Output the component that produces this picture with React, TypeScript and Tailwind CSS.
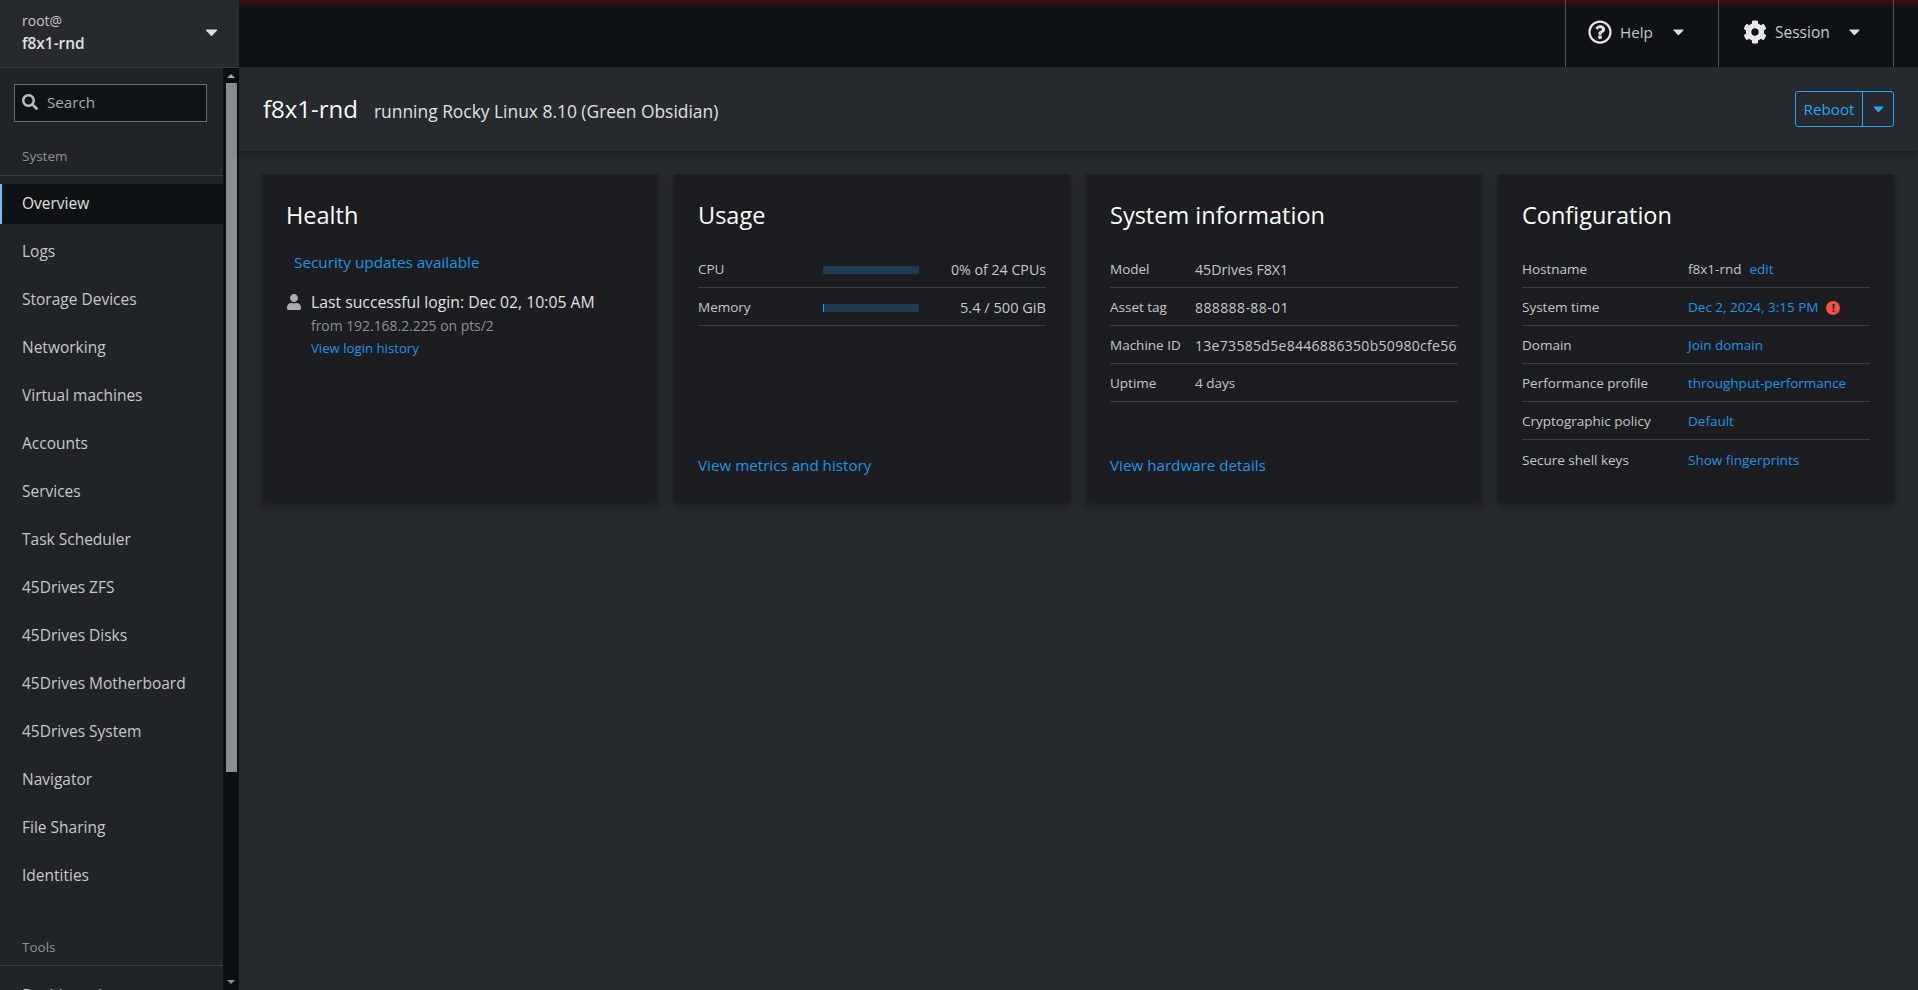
import React from "react";

const navItems = [
  "Overview",
  "Logs",
  "Storage Devices",
  "Networking",
  "Virtual machines",
  "Accounts",
  "Services",
  "Task Scheduler",
  "45Drives ZFS",
  "45Drives Disks",
  "45Drives Motherboard",
  "45Drives System",
  "Navigator",
  "File Sharing",
  "Identities",
];

function Caret({ className }: { className: string }) {
  return (
    <svg viewBox="0 0 12 8" className={className} fill="currentColor">
      <path d="M1 0.5h10c.6 0 .9.7.5 1.1l-5 5.2c-.3.3-.7.3-1 0l-5-5.2C.1 1.2.4.5 1 .5z" />
    </svg>
  );
}

function SidebarScrollbar() {
  return (
    <div className="flex w-[16px] shrink-0 flex-col items-center bg-[#0d1013]">
      <div className="mt-[6px] h-0 w-0 border-x-[4px] border-b-[4px] border-x-transparent border-b-[#a5a7a9]" />
      <div className="mt-[5px] h-[689px] w-[11px] bg-[#8b8e90]" />
      <div className="flex-1" />
      <div className="mb-[6px] h-0 w-0 border-x-[4px] border-t-[4px] border-x-transparent border-t-[#8b8e90]" />
    </div>
  );
}

function Sidebar() {
  return (
    <aside className="flex w-[239px] shrink-0 flex-col bg-[#212427]">
      <div className="flex h-[68px] shrink-0 items-center justify-between border-b border-[#3c3f42] bg-[#26292d] pb-[4px] pl-[22px] pr-[21px]">
        <div className="flex flex-col">
          <span className="text-[14px] leading-[24px] text-[#c7c7c7]">root@</span>
          <span className="text-[15.4px] font-semibold leading-[22px] text-[#e0e0e0]">f8x1-rnd</span>
        </div>
        <Caret className="mt-[2px] h-[8px] w-[13px] text-[#e0e0e0]" />
      </div>
      <div className="flex min-h-0 flex-1">
        <div className="min-w-0 flex-1 overflow-hidden">
          <div className="pl-[14px] pr-[16px] pt-[16px]">
            <div className="flex h-[38px] items-center gap-[9px] border border-[#6a6e73] bg-[#101316] pb-[2px] pl-[7px]">
              <svg viewBox="0 0 512 512" className="h-[16px] w-[16px] text-[#b8bbbe]" fill="currentColor">
                <path d="M505 442.7L405.3 343c-4.5-4.5-10.6-7-17-7H372c27.6-35.3 44-79.7 44-128C416 93.1 322.9 0 208 0S0 93.1 0 208s93.1 208 208 208c48.3 0 92.7-16.4 128-44v16.3c0 6.4 2.5 12.5 7 17l99.7 99.700c9.4 9.4 24.6 9.4 33.9 0l28.3-28.3c9.4-9.4 9.4-24.6.1-34zM208 336c-70.7 0-128-57.2-128-128 0-70.7 57.2-128 128-128 70.7 0 128 57.2 128 128 0 70.7-57.2 128-128 128z" />
              </svg>
              <span className="text-[15.2px] text-[#a9abae]">Search</span>
            </div>
          </div>
          <div className="mt-[24px] border-b border-[#3c3f42] pb-[9px] pl-[22px] text-[13.5px] leading-[20px] text-[#8f9194]">
            System
          </div>
          <nav className="mt-[8px] flex flex-col gap-[8px]">
            {navItems.map((item, i) => (
              <div
                key={item}
                className={
                  i === 0
                    ? "flex h-[40px] items-center border-l-2 border-[#73bcf7] bg-[#0f1214] pl-[20px] text-[15.5px] text-[#e0e0e0]"
                    : "flex h-[40px] items-center pl-[22px] text-[15.5px] text-[#c7c7c7]"
                }
              >
                {item}
              </div>
            ))}
          </nav>
          <div className="mt-[41px] border-b border-[#3c3f42] pb-[8px] pl-[22px] text-[13.5px] leading-[20px] text-[#8f9194]">
            Tools
          </div>
          <div className="mt-[18px] pl-[22px] text-[15.5px] text-[#c7c7c7]">Dashboard</div>
        </div>
        <SidebarScrollbar />
      </div>
    </aside>
  );
}

function TopBar() {
  return (
    <header className="relative flex h-[67px] shrink-0 justify-end bg-[#0f1214] pr-[24px]">
      <div className="absolute inset-x-0 top-0 h-[8px] bg-gradient-to-b from-[#3f0e14] to-[#0f1214]" />
      <div className="relative flex h-full w-[153px] items-center border-l border-[#4f5255] pb-[3px] pl-[22px] text-[#c7c7c7]">
        <svg viewBox="0 0 512 512" className="h-[24px] w-[24px] text-[#e8e8e8]" fill="currentColor">
          <path d="M256 8C119 8 8 119 8 256s111 248 248 248 248-111 248-248S393 8 256 8zm0 448c-110.500 0-200-89.500-200-200S145.500 56 256 56s200 89.500 200 200-89.500 200-200 200zm107-255c0 67-72.400 68-72.400 92.800v6.200c0 6.600-5.400 12-12 12h-45.200c-6.600 0-12-5.400-12-12v-8.500c0-35.700 27.100-50 47.600-61.500 17.500-9.800 28.300-16.500 28.300-29.600 0-17.200-22-28.700-39.800-28.700-23.200 0-33.900 11-49 30-4.100 5.100-11.500 6.100-16.700 2.100l-27.600-20.900c-5.100-3.900-6.200-11-2.600-16.300C187.700 134.400 215.500 112 262.900 112c48 0 100.100 37.500 100.100 89zM298 368c0 23.200-18.800 42-42 42s-42-18.800-42-42 18.800-42 42-42 42 18.800 42 42z" />
        </svg>
        <span className="ml-[8px] text-[15.2px] leading-[20px]">Help</span>
        <Caret className="ml-[20px] mt-[1px] h-[7px] w-[11px] text-[#e0e0e0]" />
      </div>
      <div className="relative flex h-full w-[176px] items-center border-x border-[#4f5255] pb-[3px] pl-[24px] text-[#c7c7c7]">
        <svg viewBox="0 0 512 512" className="h-[24px] w-[24px] text-[#e8e8e8]" fill="currentColor">
          <path d="M487.400 315.700l-42.600-24.600c4.300-23.200 4.300-47 0-70.200l42.600-24.600c4.900-2.800 7.100-8.600 5.500-14-11.100-35.600-30-67.800-54.700-94.600-3.800-4.100-10-5.100-14.800-2.300L380.800 110c-17.900-15.400-38.500-27.300-60.800-35.100V25.800c0-5.600-3.900-10.500-9.400-11.700-36.700-8.200-74.300-7.800-109.200 0-5.500 1.200-9.400 6.100-9.400 11.700V75c-22.200 7.900-42.800 19.800-60.800 35.100L88.700 85.500c-4.900-2.800-11-1.900-14.800 2.300-24.700 26.700-43.600 58.900-54.700 94.600-1.700 5.400.6 11.200 5.500 14L67.300 221c-4.300 23.200-4.300 47 0 70.200l-42.600 24.600c-4.900 2.800-7.100 8.600-5.500 14 11.100 35.600 30 67.800 54.700 94.600 3.800 4.100 10 5.100 14.800 2.300l42.600-24.600c17.900 15.400 38.500 27.300 60.800 35.100v49.200c0 5.600 3.900 10.500 9.400 11.700 36.700 8.200 74.300 7.800 109.200 0 5.500-1.200 9.400-6.100 9.400-11.700v-49.200c22.200-7.900 42.800-19.800 60.800-35.100l42.600 24.600c4.900 2.800 11 1.900 14.800-2.300 24.700-26.700 43.600-58.900 54.700-94.600 1.500-5.500-.7-11.300-5.600-14.100zM256 336c-44.100 0-80-35.900-80-80s35.900-80 80-80 80 35.900 80 80-35.900 80-80 80z" />
        </svg>
        <span className="ml-[8px] text-[15.5px] leading-[20px]">Session</span>
        <Caret className="ml-[19px] mt-[1px] h-[7px] w-[11px] text-[#e0e0e0]" />
      </div>
    </header>
  );
}

function Row({ label, labelClass, children }: { label: string; labelClass: string; children: React.ReactNode }) {
  return (
    <div className="flex h-[38px] items-center border-b border-[#3c3f42] pt-[2px] text-[13.5px]">
      <span className={labelClass + " shrink-0 text-[#c7c7c7]"}>{label}</span>
      {children}
    </div>
  );
}

function Card({ title, children }: { title: string; children: React.ReactNode }) {
  return (
    <section className="flex h-[328px] flex-col bg-[#1b1d21] px-[24px] pb-[24px] pt-[25px] shadow-[0_4px_8px_rgba(3,3,3,0.3)]">
      <h2 className="text-[23.5px] leading-[32px] font-normal text-white">{title}</h2>
      {children}
    </section>
  );
}

function CardLink({ children }: { children: React.ReactNode }) {
  return <a className="mt-auto mb-[1px] text-[15.2px] text-[#1f95e2]">{children}</a>;
}

function Bar({ used }: { used: boolean }) {
  return (
    <div className="ml-[46px] flex h-[8px] w-[96px] bg-[#1e3a4f]">
      {used && <div className="w-[1px] bg-[#2b9af3]" />}
    </div>
  );
}

export default function App() {
  return (
    <div className="flex h-[990px] w-[1918px] overflow-hidden bg-[#26292d] font-['Open_Sans',sans-serif]">
      <Sidebar />
      <div className="flex min-w-0 flex-1 flex-col">
        <TopBar />
        <div className="flex h-[84px] shrink-0 items-center justify-between bg-[#26292d] pl-[24px] pr-[24px] shadow-[0_4px_6px_rgba(3,3,3,0.25)]">
          <div className="flex items-baseline gap-[16px]">
            <span className="text-[24px] text-white">f8x1-rnd</span>
            <span className="text-[17.4px] text-[#e0e0e0]">running Rocky Linux 8.10 (Green Obsidian)</span>
          </div>
          <div className="flex h-[36px] w-[99px] rounded-[3px] border border-[#1fa7f8] text-[#1fa7f8]">
            <div className="flex flex-1 items-center justify-center border-r border-[#1fa7f8] text-[15.2px]">Reboot</div>
            <div className="flex w-[30px] items-center justify-center">
              <Caret className="h-[7px] w-[11px]" />
            </div>
          </div>
        </div>
        <div className="grid grid-cols-4 gap-[16px] pl-[23px] pr-[24px] pt-[23px]">
          <Card title="Health">
            <a className="mt-[19px] pl-[8px] text-[15.3px] leading-[24px] text-[#1f95e2]">Security updates available</a>
            <div className="ml-[1px] mt-[17px] flex gap-[10px]">
              <svg viewBox="0 0 448 512" className="mt-[3px] h-[16px] w-[14px] text-[#a9abae]" fill="currentColor">
                <path d="M224 256c70.700 0 128-57.300 128-128S294.700 0 224 0 96 57.300 96 128s57.300 128 128 128zm89.600 32h-16.700c-22.200 10.200-46.900 16-72.900 16s-50.600-5.800-72.900-16h-16.700C60.200 288 0 348.200 0 422.400V464c0 26.500 21.500 48 48 48h352c26.500 0 48-21.500 48-48v-41.600c0-74.200-60.200-134.400-134.400-134.400z" />
              </svg>
              <div className="flex flex-col">
                <span className="text-[15.75px] leading-[23px] text-[#e0e0e0]">Last successful login: Dec 02, 10:05 AM</span>
                <span className="text-[13.9px] leading-[23px] text-[#8f9194]">from 192.168.2.225 on pts/2</span>
                <a className="text-[13.2px] leading-[23px] text-[#1f95e2]">View login history</a>
              </div>
            </div>
          </Card>
          <Card title="Usage">
            <div className="mt-[19px] flex flex-col">
              <Row label="CPU" labelClass="w-[79px]">
                <Bar used={false} />
                <span className="ml-auto text-[14.2px] text-[#c7c7c7]">0% of 24 CPUs</span>
              </Row>
              <Row label="Memory" labelClass="w-[79px]">
                <Bar used />
                <span className="ml-auto text-[14.6px] text-[#c7c7c7]">5.4 / 500 GiB</span>
              </Row>
            </div>
            <CardLink>View metrics and history</CardLink>
          </Card>
          <Card title="System information">
            <div className="mt-[19px] flex flex-col">
              <Row label="Model" labelClass="w-[85px]">
                <span className="text-[14.2px] text-[#c7c7c7]">45Drives F8X1</span>
              </Row>
              <Row label="Asset tag" labelClass="w-[85px]">
                <span className="text-[14px] tracking-[0.4px] text-[#c7c7c7]">888888-88-01</span>
              </Row>
              <Row label="Machine ID" labelClass="w-[85px]">
                <span className="text-[14px] tracking-[0.3px] text-[#c7c7c7]">13e73585d5e8446886350b50980cfe56</span>
              </Row>
              <Row label="Uptime" labelClass="w-[85px]">
                <span className="text-[#c7c7c7]">4 days</span>
              </Row>
            </div>
            <CardLink>View hardware details</CardLink>
          </Card>
          <Card title="Configuration">
            <div className="mt-[19px] flex flex-col">
              <Row label="Hostname" labelClass="w-[166px]">
                <span className="text-[#c7c7c7]">f8x1-rnd</span>
                <a className="ml-[8px] text-[#1f95e2]">edit</a>
              </Row>
              <Row label="System time" labelClass="w-[166px]">
                <a className="text-[#1f95e2]">Dec 2, 2024, 3:15 PM</a>
                <span className="ml-[8px] flex h-[14px] w-[14px] items-center justify-center rounded-full bg-[#f54f42] text-[11px] leading-none font-bold text-[#1b1d21]">!</span>
              </Row>
              <Row label="Domain" labelClass="w-[166px]">
                <a className="text-[#1f95e2]">Join domain</a>
              </Row>
              <Row label="Performance profile" labelClass="w-[166px]">
                <a className="text-[#1f95e2]">throughput-performance</a>
              </Row>
              <Row label="Cryptographic policy" labelClass="w-[166px]">
                <a className="text-[#1f95e2]">Default</a>
              </Row>
              <div className="flex h-[38px] items-center pt-[2px] text-[13.5px]">
                <span className="w-[166px] shrink-0 text-[#c7c7c7]">Secure shell keys</span>
                <a className="text-[#1f95e2]">Show fingerprints</a>
              </div>
            </div>
          </Card>
        </div>
      </div>
    </div>
  );
}
